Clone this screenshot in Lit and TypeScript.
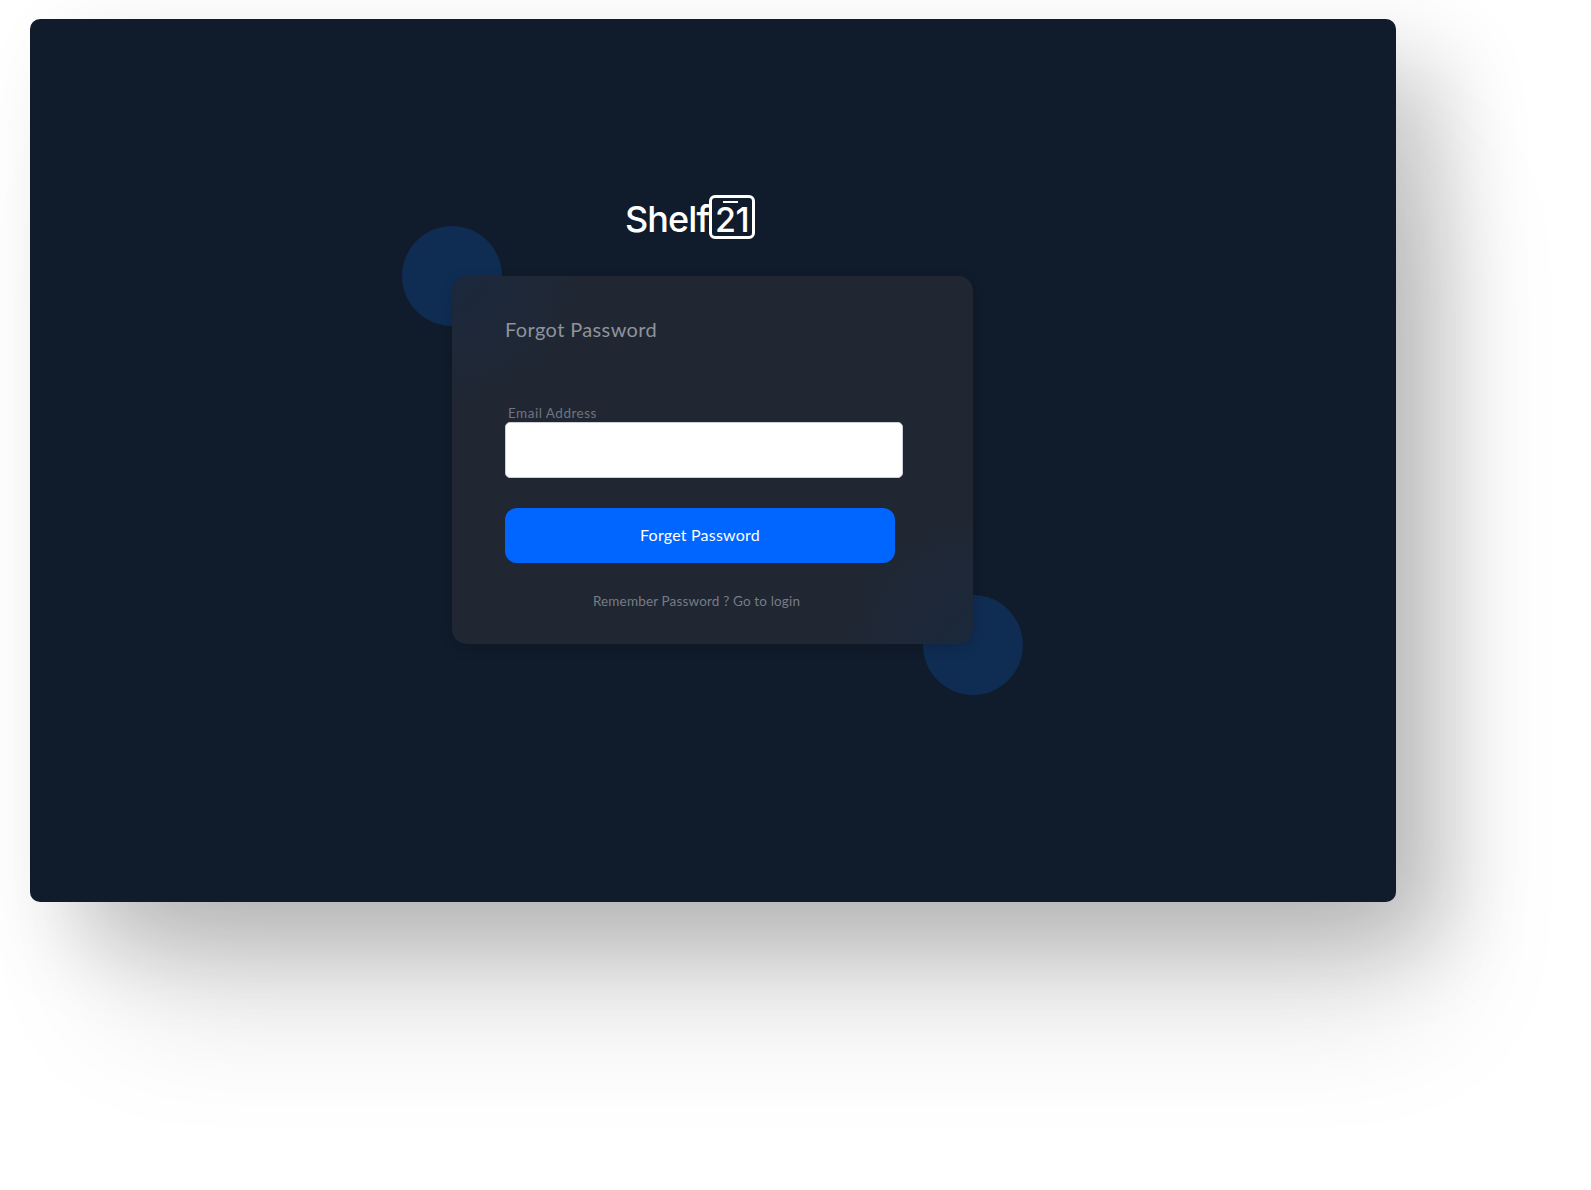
import { LitElement, html, css } from "lit";
import { customElement } from "lit/decorators.js";

@customElement("app-root")
export class AppRoot extends LitElement {
  static styles = css`
    :host {
      display: block;
      width: 1591px;
      height: 1190px;
      overflow: hidden;
      background: #fff;
      font-family: "Lato", "Inter", sans-serif;
      box-sizing: border-box;
      padding: 19px 0 0 30px;
    }
    .panel {
      width: 1366px;
      height: 883px;
      box-sizing: border-box;
      background: #101b2b;
      border-radius: 10px;
      box-shadow: 45px 40px 90px rgba(0, 0, 0, 0.2),
        60px 130px 130px -30px rgba(0, 0, 0, 0.13);
      padding: 176px 0 0 422px;
    }
    .logo {
      display: flex;
      align-items: flex-start;
      margin-left: 174px;
      height: 81px;
      color: #fff;
    }
    .word {
      font-family: "Inter", sans-serif;
      font-weight: 500;
      font-size: 36px;
      line-height: 44px;
      letter-spacing: -0.9px;
      width: 84px;
      margin-top: 2px;
      margin-left: -1px;
    }
    .box {
      position: relative;
      width: 46px;
      height: 44px;
      box-sizing: border-box;
      border: 3.5px solid #fff;
      border-radius: 6px;
      text-align: center;
      font-family: "Inter", sans-serif;
      font-weight: 500;
      font-size: 34px;
      line-height: 44px;
      letter-spacing: -0.6px;
    }
    .bar {
      position: absolute;
      top: 2.5px;
      left: 11px;
      width: 15px;
      height: 2px;
      background: #fff;
    }
    .stage {
      position: relative;
      width: 521px;
      height: 368px;
    }
    .circle {
      position: absolute;
      width: 100px;
      height: 100px;
      border-radius: 50%;
      background: #0f2c52;
    }
    .c1 { left: -50px; top: -50px; }
    .c2 { left: 471px; top: 319px; }
    .card {
      position: relative;
      box-sizing: border-box;
      width: 521px;
      height: 368px;
      padding: 41px 0 0 53px;
      border-radius: 15px;
      background: radial-gradient(circle at 0 0, rgba(15, 44, 82, 0.3), rgba(15, 44, 82, 0) 130px),
        radial-gradient(circle at 100% 100%, rgba(15, 44, 82, 0.3), rgba(15, 44, 82, 0) 130px),
        #202733;
      box-shadow: 0 4px 14px rgba(0, 0, 0, 0.12);
    }
    h1 {
      margin: 0;
      font-size: 20px;
      line-height: 24px;
      font-weight: 400;
      color: #8e939c;
      letter-spacing: 0.38px;
    }
    label {
      display: block;
      margin: 64px 0 1px 3px;
      font-size: 13.5px;
      line-height: 16px;
      color: #6f747d;
      letter-spacing: 0.5px;
    }
    .input {
      display: block;
      box-sizing: border-box;
      width: 398px;
      height: 56px;
      border: 1px solid #ccd0d6;
      border-radius: 5px;
      background: #fff;
      padding: 0;
    }
    button {
      display: block;
      width: 390px;
      height: 55px;
      margin-top: 30px;
      border: 0;
      border-radius: 12px;
      background: #0066ff;
      color: #fff;
      font: 400 16px "Lato", sans-serif;
      letter-spacing: 0.22px;
      padding: 0 0 2px;
    }
    .link {
      width: 383px;
      margin: 30px 0 0 0;
      text-align: center;
      font-size: 13.5px;
      line-height: 16px;
      letter-spacing: 0.16px;
      color: #777c85;
    }
  `;

  render() {
    return html`
      <div class="panel">
        <div class="logo">
          <span class="word">Shelf</span>
          <span class="box"><i class="bar"></i>21</span>
        </div>
        <div class="stage">
          <div class="circle c1"></div>
          <div class="circle c2"></div>
          <div class="card">
            <h1>Forgot Password</h1>
            <label>Email Address</label>
            <input class="input" type="text" />
            <button>Forget Password</button>
            <div class="link">Remember Password ? Go to login</div>
          </div>
        </div>
      </div>
    `;
  }
}
